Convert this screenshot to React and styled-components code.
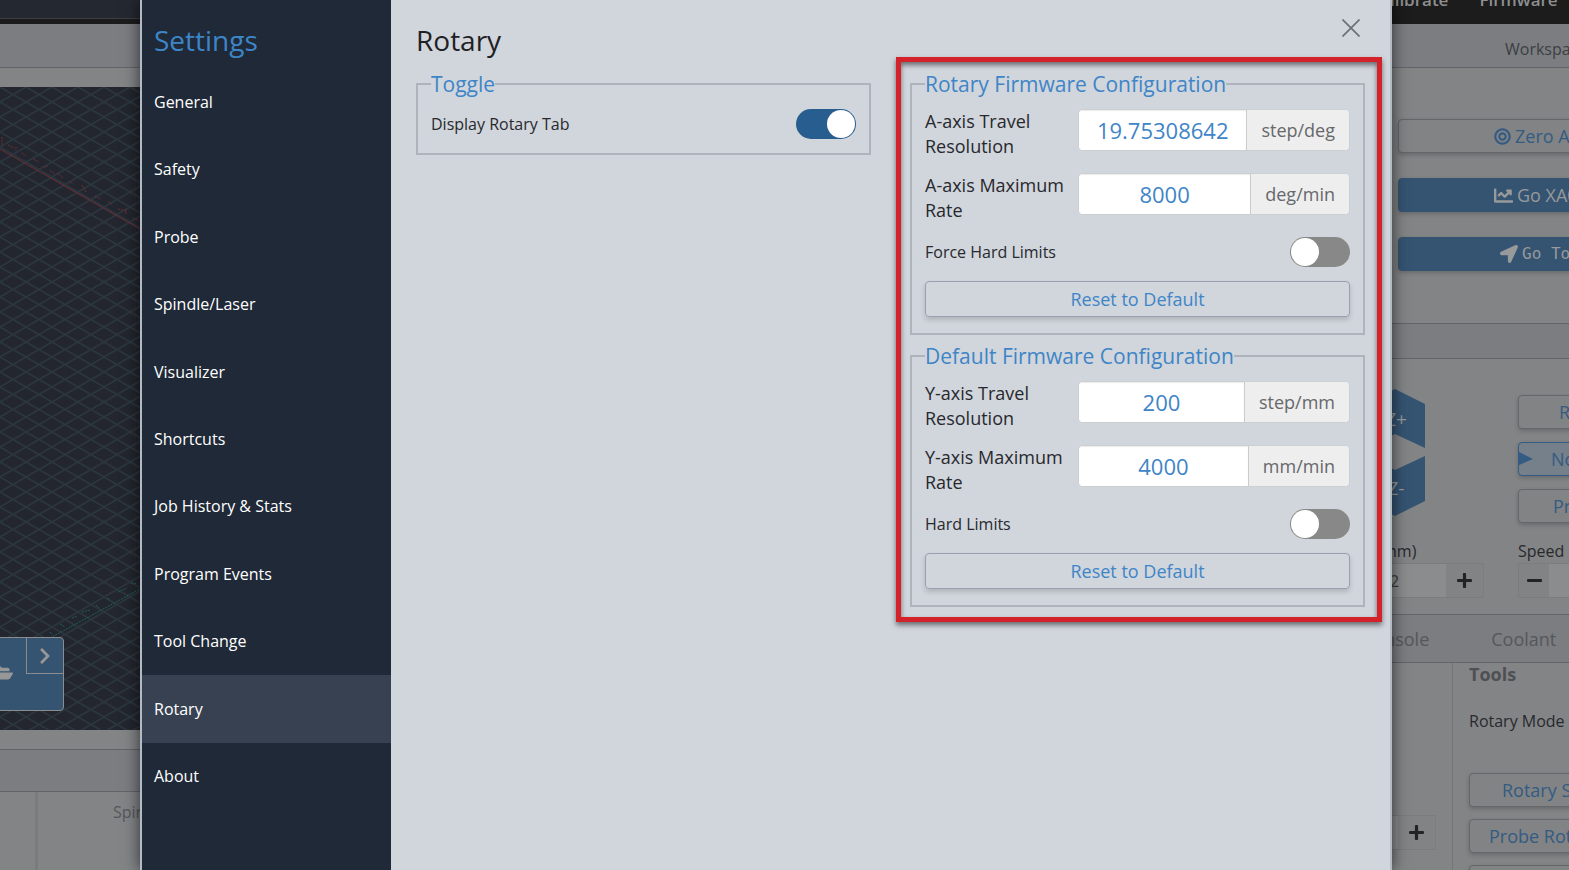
import React from "react";
import styled, { createGlobalStyle, css } from "styled-components";
import {
  FaBullseye,
  FaChartLine,
  FaChevronRight,
  FaFolderOpen,
  FaLocationArrow,
  FaMinus,
  FaPlus,
} from "react-icons/fa";

const GlobalStyle = createGlobalStyle`
  *, *::before, *::after { box-sizing: border-box; }
  html, body { margin: 0; height: 100%; overflow: hidden; }
  #root { height: 100%; }
  body {
    font-family: "Open Sans", "Noto Sans", sans-serif;
    font-size: 16px;
    line-height: 24px;
    color: #27292d;
    background: #838486;
  }
  button, input { font: inherit; margin: 0; }
`;

const Screen = styled.div`
  display: grid;
  grid-template-columns: 140px minmax(0, 1fr) 177px;
  grid-template-rows: minmax(0, 1fr);
  height: 100vh;
  overflow: hidden;
`;

/* Dimmed application behind the dialog */

const LeftBackdrop = styled.div`
  display: flex;
  flex-direction: column;
  margin-right: -60px;
  background: #838486;
`;

const RightBackdrop = styled.div`
  display: flex;
  flex-direction: column;
  margin-left: -60px;
  overflow: hidden;
  white-space: nowrap;
  background: #838486;
`;

const TitleStrip = styled.div`
  flex: none;
  height: 24px;
  background: #242830;
  border-bottom: 5px solid #1c1c1c;
  box-shadow: inset 0 -1px 0 #3b3e44;
`;

const MenuBar = styled.nav`
  flex: none;
  display: flex;
  align-items: flex-end;
  gap: 31px;
  height: 24px;
  padding: 0 0 12px 42px;
  overflow: hidden;
  background: #1c1c1c;
`;

const MenuLink = styled.a`
  color: #8e8f91;
  font-size: 17px;
  font-weight: 600;
  text-decoration: none;
`;

const Bar = styled.div`
  flex: none;
  display: flex;
  align-items: center;
  height: ${(p) => p.$height}px;
  padding-left: ${(p) => p.$indent || 0}px;
  gap: 62px;
  font-size: ${(p) => p.$size || 16}px;
  color: ${(p) => (p.$muted ? "#55575b" : "#3d3f43")};
  background: #7b7d81;
  border-top: ${(p) => (p.$top ? "1px solid #626468" : "0")};
  border-bottom: 1px solid #626468;
`;

const WorkspaceBar = styled(Bar)`
  padding-top: 6px;
`;

const TabLink = styled.a`
  color: inherit;
  text-decoration: none;
`;

const Viewer = styled.div`
  position: relative;
  flex: 1;
  margin: 19px 0;
  overflow: hidden;
  background: #23262e;
`;

const Scene = styled.svg`
  display: block;
  width: 100%;
  height: 100%;
`;

const LoadPanel = styled.div`
  position: absolute;
  left: -60px;
  bottom: 19px;
  display: flex;
  align-items: flex-start;
  justify-content: space-between;
  width: 124px;
  height: 74px;
  color: #979797;
  background: #355472;
  border: 1px solid #8a8c8f;
  border-radius: 4px;
`;

const LoadButton = styled.button`
  align-self: center;
  margin-left: 51px;
  padding: 0;
  height: 24px;
  color: inherit;
  background: none;
  border: 0;
  font-size: 21px;
`;

const ExpandButton = styled.button`
  display: grid;
  place-items: center;
  width: 37px;
  height: 36px;
  padding: 0;
  color: inherit;
  background: none;
  border: solid #8a8c8f;
  border-width: 0 0 1px 1px;
  font-size: 18px;
`;

const StatusArea = styled.div`
  flex: none;
  display: grid;
  grid-template-columns: 38px 1fr;
  height: 78px;
  color: #55575b;
`;

const StatusDivider = styled.div`
  border-right: 3px solid #7a7b7d;
`;

const StatusLabel = styled.span`
  padding: 8px 0 0 75px;
`;

const ButtonStack = styled.div`
  display: flex;
  flex-direction: column;
  gap: ${(p) => p.$gap}px;
`;

const LocationArea = styled.div`
  flex: none;
  height: 255px;
  padding: 51px 0 0 66px;
`;

const DimButton = styled.button`
  position: relative;
  display: flex;
  align-items: center;
  flex: none;
  gap: 4px;
  width: 240px;
  height: 34px;
  padding: 0 0 0 ${(p) => p.$indent}px;
  font-size: 18px;
  color: #345b82;
  background: ${(p) => (p.$active ? "#75808b" : "#828385")};
  border: 1px solid ${(p) => (p.$active ? "#345b82" : "#64666a")};
  border-radius: 4px;
  box-shadow: 0 2px 4px rgba(0, 0, 0, 0.2);
  ${(p) =>
    p.$filled &&
    css`
      color: #97999b;
      background: #355472;
      border-color: #355472;
    `}
  ${(p) =>
    p.$mono &&
    css`
      font-family: "DejaVu Sans Mono", monospace;
      font-size: 16px;
    `}
`;

const Marker = styled.svg`
  position: absolute;
  left: 0;
  top: 9px;
`;

const JogArea = styled.div`
  flex: none;
  display: grid;
  grid-template-columns: 186px 1fr;
  height: 255px;
  padding-top: 30px;
`;

const JogDrawing = styled.svg`
  display: block;
  margin-left: 33px;
`;

const JogColumn = styled.div`
  display: flex;
  flex-direction: column;
  justify-content: space-between;
  height: 209px;
`;

const ModeStack = styled(ButtonStack)`
  padding-top: 6px;
`;

const FieldLabel = styled.label`
  display: block;
  padding-left: ${(p) => p.$indent || 0}px;
`;

const Stepper = styled.div`
  display: flex;
  width: ${(p) => p.$width}px;
  height: 35px;
  margin-left: ${(p) => p.$indent || 0}px;
  border: 1px solid #7b7c7e;
`;

const StepperInput = styled.input`
  flex: 1;
  min-width: 0;
  padding: 0;
  text-align: center;
  color: #3b3d41;
  background: #8b8c8d;
  border: 0;
`;

const StepperButton = styled.button`
  display: grid;
  place-items: center;
  width: ${(p) => p.$width}px;
  padding: 0;
  color: #232323;
  background: #828384;
  border: 0;
  font-size: 17px;
`;

const BottomArea = styled.div`
  flex: 1;
  display: grid;
  grid-template-columns: 121px 1fr;
  min-height: 0;
`;

const BottomLeft = styled.div`
  padding-top: 152px;
  border-right: 1px solid #747577;
`;

const Tools = styled.div`
  padding-left: 16px;
`;

const ToolsTitle = styled.h3`
  margin: 0 0 24px;
  font-size: 18px;
  line-height: 22px;
  color: #4e5054;
`;

const ToolsText = styled.p`
  margin: 0 0 40px;
`;

/* Settings dialog */

const Dialog = styled.div`
  position: relative;
  z-index: 2;
  display: grid;
  grid-template-columns: 249px minmax(0, 1fr);
  background: #d1d5dc;
  border: solid #b4bac4;
  border-width: 0 2px;
  box-shadow: 0 0 15px rgba(0, 0, 0, 0.65);
`;

const Sidebar = styled.aside`
  display: flex;
  flex-direction: column;
  padding-bottom: 60px;
  background: #1f2937;
`;

const SidebarTitle = styled.h1`
  margin: 0;
  padding: 20px 12px 8px;
  font-size: 28px;
  font-weight: 400;
  line-height: 40px;
  color: #3e85c7;
`;

const Nav = styled.nav`
  flex: 1;
  display: flex;
  flex-direction: column;
`;

const NavLink = styled.a`
  flex: 1;
  display: flex;
  align-items: center;
  padding: 0 12px;
  font-weight: 500;
  color: #fff;
  text-decoration: none;
  background: ${(p) => (p.$active ? "#374151" : "transparent")};
`;

const Content = styled.main`
  padding: 0 25px;
`;

const ContentHeader = styled.header`
  display: flex;
  justify-content: space-between;
  height: 70px;
  padding-top: 19px;
`;

const PageTitle = styled.h2`
  margin: 0;
  font-size: 28px;
  font-weight: 400;
  line-height: 42px;
  color: #1f2124;
`;

const CloseButton = styled.button`
  width: 28px;
  height: 18px;
  padding: 0 5px;
  background: none;
  border: 0;
  line-height: 0;
`;

const Columns = styled.div`
  display: grid;
  grid-template-columns: repeat(2, minmax(0, 1fr));
  align-items: start;
  gap: 39px;
`;

const Column = styled.div`
  position: relative;
  display: flex;
  flex-direction: column;
  gap: 7px;
`;

const Highlight = styled.div`
  position: absolute;
  inset: -13px -17px -15px -14px;
  pointer-events: none;
  border: 5px solid #d3222a;
  box-shadow: 0 3px 5px rgba(0, 0, 0, 0.5), inset 0 3px 5px rgba(0, 0, 0, 0.5);
`;

const Group = styled.fieldset`
  min-width: 0;
  margin: 0;
  padding: 11px 13px 14px;
  border: 2px solid #afb3bb;
`;

const Legend = styled.legend`
  padding: 0;
  font-size: 21px;
  line-height: 28px;
  color: #3e85c7;
`;

const Rows = styled.div`
  display: flex;
  flex-direction: column;
  gap: 14px;
`;

const Row = styled.div`
  display: flex;
  align-items: flex-start;
  justify-content: space-between;
`;

const SwitchRow = styled(Row)`
  align-items: center;
`;

const RowLabel = styled.label`
  font-size: 18px;
  line-height: 25px;
`;

const InputGroup = styled.div`
  flex: 0 0 64%;
  display: flex;
  height: 42px;
  overflow: hidden;
  background: #fff;
  border: 1px solid #ccced2;
  border-radius: 5px;
`;

const NumberInput = styled.input`
  flex: 1;
  min-width: 0;
  padding: 0 12px;
  font-size: 22px;
  text-align: center;
  color: #3e85c7;
  background: #fff;
  border: 0;
  box-shadow: inset 0 1px 1px rgba(0, 0, 0, 0.08);
`;

const Unit = styled.span`
  display: flex;
  align-items: center;
  padding: 0 14px;
  font-size: 18px;
  color: #66686b;
  background: #eee;
  border-left: 1px solid #ccc;
`;

const Switch = styled.input`
  appearance: none;
  display: block;
  width: 60px;
  height: 30px;
  padding: 1px;
  background: #888;
  border-radius: 15px;
  &::before {
    content: "";
    display: block;
    width: 28px;
    height: 28px;
    background: #fff;
    border-radius: 50%;
  }
  &:checked {
    background: #285d8f;
  }
  &:checked::before {
    margin-left: 30px;
  }
`;

const ResetButton = styled.button`
  height: 36px;
  margin-bottom: 2px;
  padding: 0;
  font-size: 18px;
  color: #3e85c7;
  background: transparent;
  border: 1px solid #9aa0ad;
  border-radius: 4px;
  box-shadow: 0 3px 5px rgba(0, 0, 0, 0.15);
`;

const navItems = [
  "General",
  "Safety",
  "Probe",
  "Spindle/Laser",
  "Visualizer",
  "Shortcuts",
  "Job History & Stats",
  "Program Events",
  "Tool Change",
  "Rotary",
  "About",
];

const firmwareGroups = [
  {
    title: "Rotary Firmware Configuration",
    prefix: "rotary",
    fields: [
      { label: "A-axis Travel Resolution", value: "19.75308642", unit: "step/deg" },
      { label: "A-axis Maximum Rate", value: "8000", unit: "deg/min" },
    ],
    limits: "Force Hard Limits",
  },
  {
    title: "Default Firmware Configuration",
    prefix: "default",
    fields: [
      { label: "Y-axis Travel Resolution", value: "200", unit: "step/mm" },
      { label: "Y-axis Maximum Rate", value: "4000", unit: "mm/min" },
    ],
    limits: "Hard Limits",
  },
];

function FirmwareGroup({ title, prefix, fields, limits }) {
  return (
    <Group>
      <Legend>{title}</Legend>
      <Rows>
        {fields.map((f, i) => (
          <Row key={f.label}>
            <RowLabel htmlFor={`${prefix}-${i}`}>{f.label}</RowLabel>
            <InputGroup>
              <NumberInput id={`${prefix}-${i}`} defaultValue={f.value} />
              <Unit>{f.unit}</Unit>
            </InputGroup>
          </Row>
        ))}
        <SwitchRow>
          <label htmlFor={`${prefix}-limits`}>{limits}</label>
          <Switch type="checkbox" role="switch" id={`${prefix}-limits`} />
        </SwitchRow>
        <ResetButton type="button">Reset to Default</ResetButton>
      </Rows>
    </Group>
  );
}

function SettingsDialog() {
  return (
    <Dialog role="dialog" aria-label="Settings">
      <Sidebar>
        <SidebarTitle>Settings</SidebarTitle>
        <Nav>
          {navItems.map((item) => (
            <NavLink key={item} href="#" $active={item === "Rotary"}>
              {item}
            </NavLink>
          ))}
        </Nav>
      </Sidebar>
      <Content>
        <ContentHeader>
          <PageTitle>Rotary</PageTitle>
          <CloseButton type="button" aria-label="Close">
            <svg width="18" height="18" viewBox="0 0 18 18" stroke="#6c6f74" strokeWidth="1.7">
              <path d="M.5 .5 17.5 17.5M17.5 .5 .5 17.5" />
            </svg>
          </CloseButton>
        </ContentHeader>
        <Columns>
          <Column>
            <Group>
              <Legend>Toggle</Legend>
              <SwitchRow>
                <label htmlFor="display-tab">Display Rotary Tab</label>
                <Switch type="checkbox" role="switch" id="display-tab" defaultChecked />
              </SwitchRow>
            </Group>
          </Column>
          <Column>
            {firmwareGroups.map((g) => (
              <FirmwareGroup key={g.prefix} {...g} />
            ))}
            <Highlight />
          </Column>
        </Columns>
      </Content>
    </Dialog>
  );
}

function LeftApp() {
  return (
    <LeftBackdrop>
      <TitleStrip />
      <Bar $height={44} />
      <Viewer>
        <Scene>
          <defs>
            <pattern id="grid" width="26" height="15" patternUnits="userSpaceOnUse">
              <path d="M0 0 26 15M26 0 0 15" stroke="#2b363e" strokeWidth="1.6" />
            </pattern>
          </defs>
          <rect width="100%" height="100%" fill="url(#grid)" />
          <g fill="none" stroke="#6f2f37">
            <path d="M0 62 140 142 200 176" />
            <path
              d="M2 50v9M8 58l6 3M16 60v4M22 66l4 3M33 72l6 3M44 80l4-1M50 84l5 3M57 86l6 5M70 95l3 2M82 98l4 7M95 109l6 3M108 114l4 4M118 122l8 2M126 122v6M133 131l6 3"
              strokeDasharray="2 1"
            />
          </g>
          <g fill="none" stroke="#1f6257">
            <path d="M50 551 140 502 200 468" strokeDasharray="2 1" />
            <path
              d="M50 545l2 3M60 537l5 3M72 531l5-2M82 525l8-2M96 518l3 3M108 511l2 3M118 505l9-4M131 496l6 1"
              strokeDasharray="2 1"
            />
          </g>
        </Scene>
        <LoadPanel>
          <LoadButton type="button" aria-label="Load file">
            <FaFolderOpen />
          </LoadButton>
          <ExpandButton type="button" aria-label="Recent files">
            <FaChevronRight />
          </ExpandButton>
        </LoadPanel>
      </Viewer>
      <Bar $height={43} $top />
      <StatusArea>
        <StatusDivider />
        <StatusLabel>Spindle</StatusLabel>
      </StatusArea>
    </LeftBackdrop>
  );
}

function RightApp() {
  return (
    <RightBackdrop>
      <MenuBar>
        <MenuLink href="#">Calibrate</MenuLink>
        <MenuLink href="#">Firmware</MenuLink>
      </MenuBar>
      <WorkspaceBar $height={44} $indent={173}>
        Workspace
      </WorkspaceBar>
      <LocationArea>
        <ButtonStack $gap={25}>
          <DimButton type="button" $indent={95}>
            <FaBullseye size={17} /> Zero A
          </DimButton>
          <DimButton type="button" $indent={95} $filled>
            <FaChartLine size={19} /> Go XA0
          </DimButton>
          <DimButton type="button" $indent={101} $filled $mono>
            <FaLocationArrow size={18} /> Go To
          </DimButton>
        </ButtonStack>
      </LocationArea>
      <Bar $height={36} $top />
      <JogArea>
        <JogColumn>
          <JogDrawing width="60" height="128" viewBox="0 0 60 128">
            <g fill="#355472">
              <path d="M0 15 30 0 60 15V59L30 45 0 59Z" />
              <path d="M0 67 30 81 60 67V112L30 127 0 112Z" />
            </g>
            <g fill="#97999b" fontSize="19" textAnchor="middle">
              <text x="31" y="37">Z+</text>
              <text x="31" y="106">Z-</text>
            </g>
          </JogDrawing>
          <div>
            <FieldLabel htmlFor="z-step" $indent={32}>
              Z (mm)
            </FieldLabel>
            <Stepper $width={142} $indent={10}>
              <StepperInput id="z-step" defaultValue="2" />
              <StepperButton type="button" aria-label="Increase Z" $width={37}>
                <FaPlus />
              </StepperButton>
            </Stepper>
          </div>
        </JogColumn>
        <JogColumn>
          <ModeStack $gap={13}>
            <DimButton type="button" $indent={40}>Rapid</DimButton>
            <DimButton type="button" $indent={32} $active>
              <Marker width="14" height="14" viewBox="0 0 14 14" fill="#345b82">
                <path d="M0 0 14 7 0 13Z" />
              </Marker>
              Normal
            </DimButton>
            <DimButton type="button" $indent={34}>Precise</DimButton>
          </ModeStack>
          <div>
            <FieldLabel htmlFor="speed">Speed</FieldLabel>
            <Stepper $width={150}>
              <StepperButton type="button" aria-label="Decrease speed" $width={30}>
                <FaMinus />
              </StepperButton>
              <StepperInput id="speed" />
            </Stepper>
          </div>
        </JogColumn>
      </JogArea>
      <Bar $height={49} $top $muted $indent={30} $size={18}>
        <TabLink href="#">Console</TabLink>
        <TabLink href="#">Coolant</TabLink>
      </Bar>
      <BottomArea>
        <BottomLeft>
          <Stepper $width={94} $indent={10}>
            <StepperInput aria-label="Distance" />
            <StepperButton type="button" aria-label="Increase distance" $width={37}>
              <FaPlus />
            </StepperButton>
          </Stepper>
        </BottomLeft>
        <Tools>
          <ToolsTitle>Tools</ToolsTitle>
          <ToolsText>Rotary Mode</ToolsText>
          <ButtonStack $gap={12}>
            <DimButton type="button" $indent={32}>Rotary Surfacing</DimButton>
            <DimButton type="button" $indent={19}>Probe Rotary Z-Axis</DimButton>
            <DimButton type="button" $indent={19} aria-label="Y-axis Alignment" />
          </ButtonStack>
        </Tools>
      </BottomArea>
    </RightBackdrop>
  );
}

export default function App() {
  return (
    <>
      <GlobalStyle />
      <Screen>
        <LeftApp />
        <SettingsDialog />
        <RightApp />
      </Screen>
    </>
  );
}
